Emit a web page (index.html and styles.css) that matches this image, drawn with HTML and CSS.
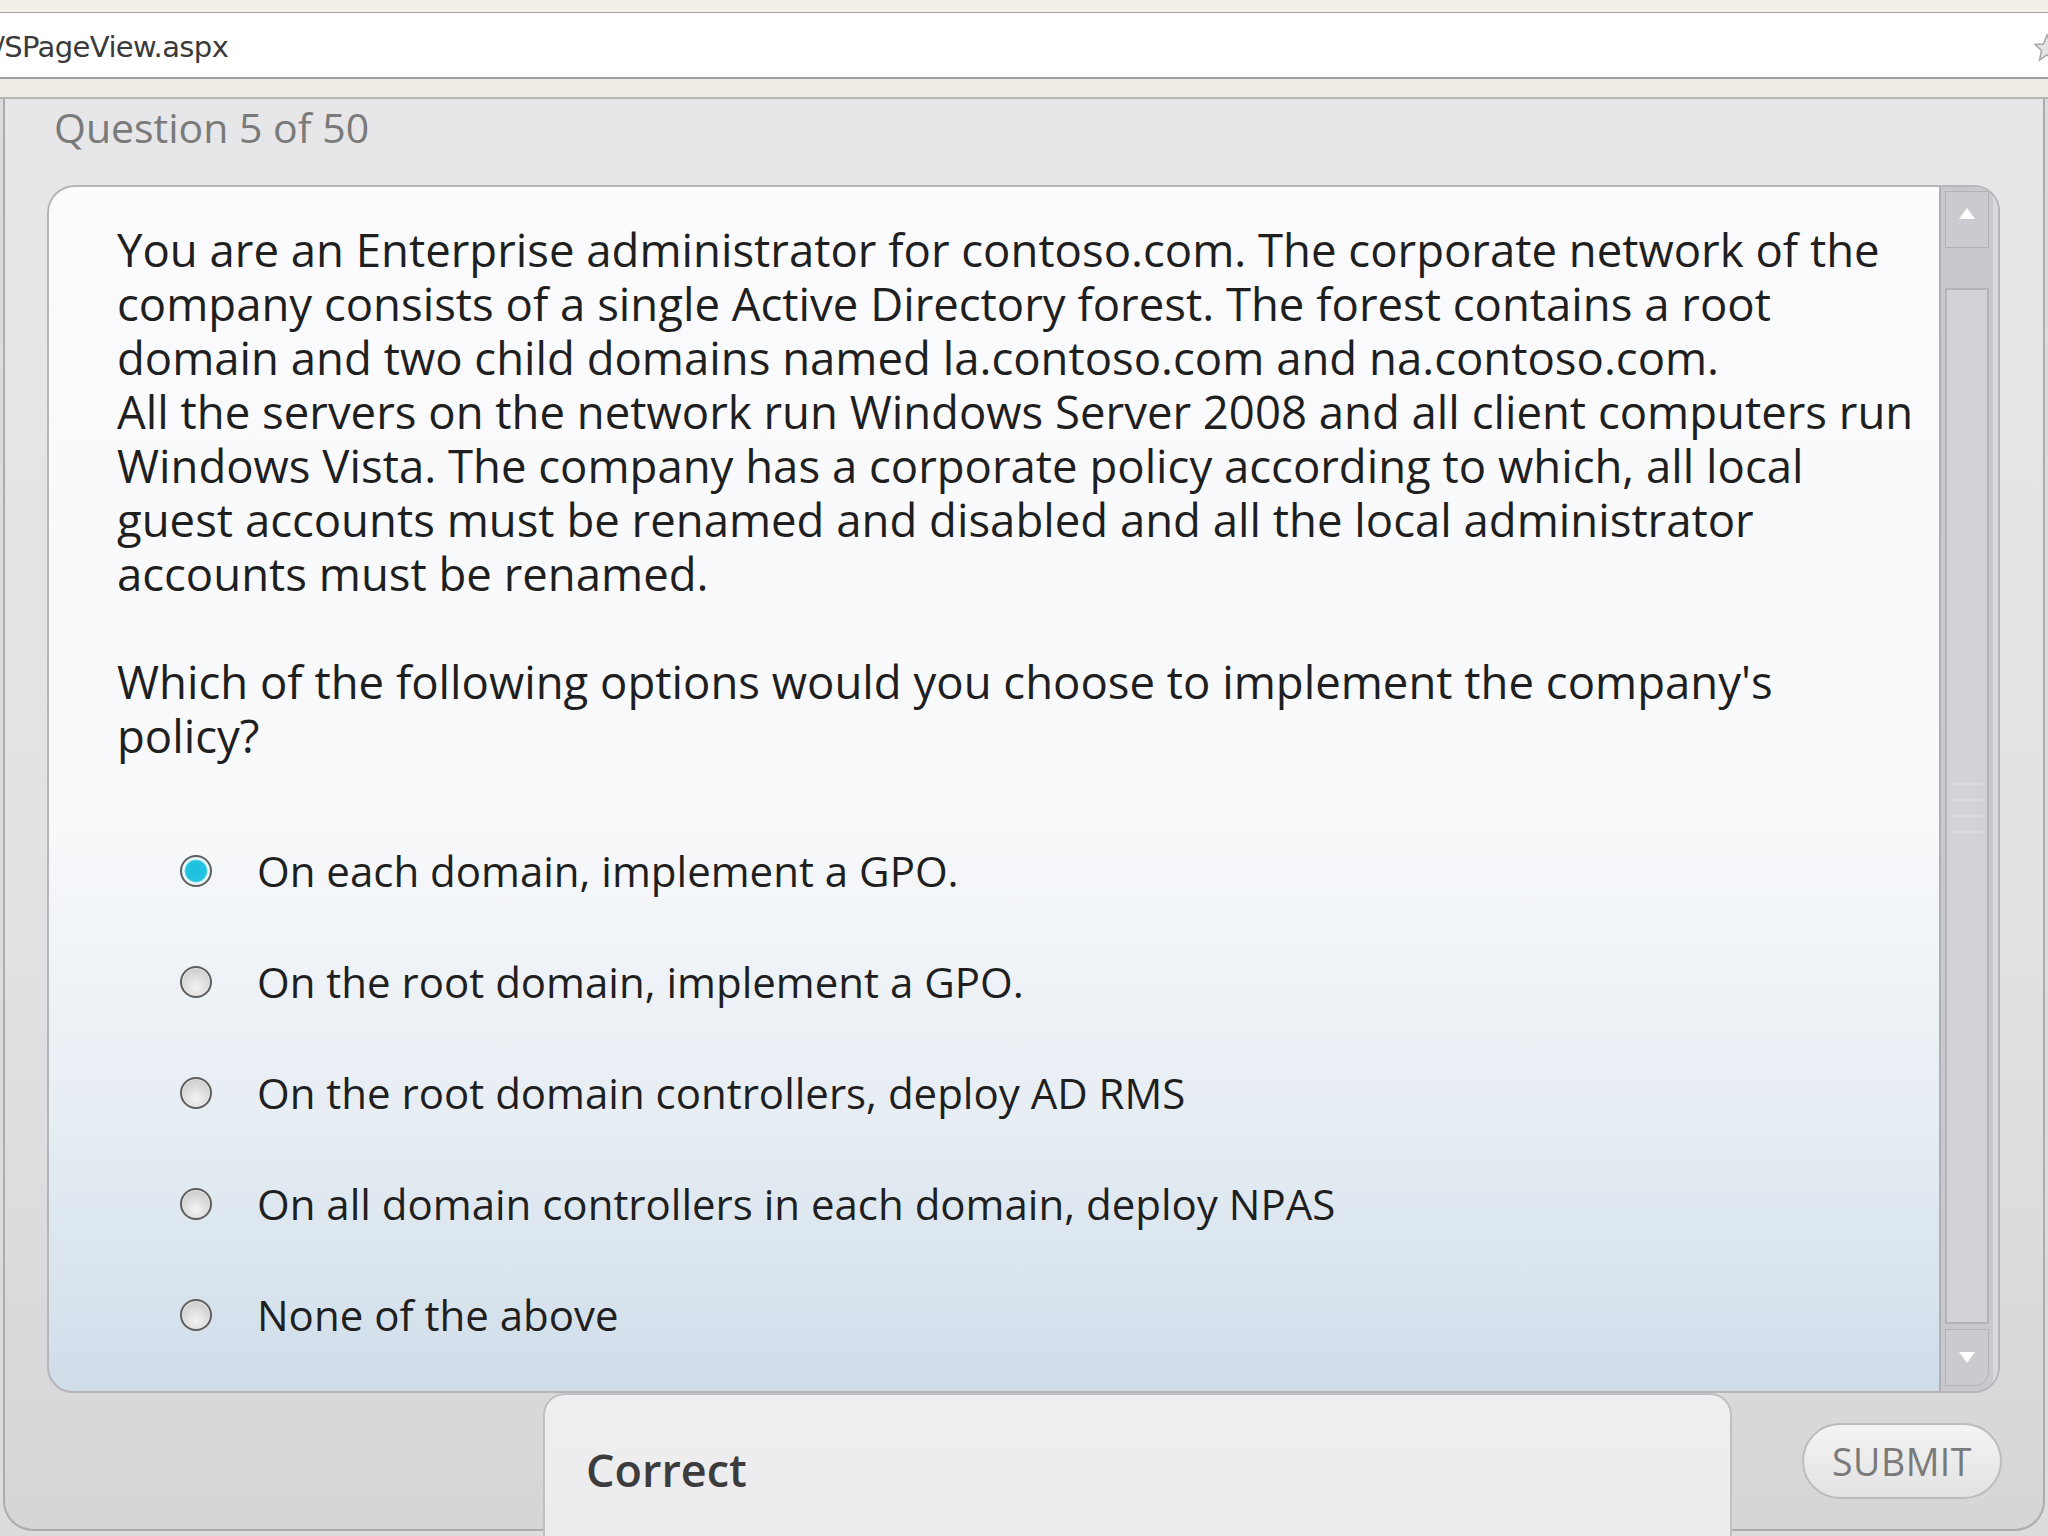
FILE: index.html
```html
<!DOCTYPE html>
<html lang="en">
<head>
  <meta charset="UTF-8">
  <title>Question 5 of 50</title>
  <link rel="stylesheet" href="styles.css">
</head>
<body>
  <div class="chrome-top"></div>
  <div class="address-bar">
    <span class="url">/SPageView.aspx</span>
    <svg class="fav-star" width="26" height="30" viewBox="0 0 26 30">
      <path d="M13 2 L16.5 11 L25 11.5 L18.5 17.5 L20.5 27 L13 22 L5.5 27 L7.5 17.5 L1 11.5 L9.5 11 Z" fill="#e4e4e4" stroke="#a6a6a6" stroke-width="1.5"/>
    </svg>
  </div>
  <div class="toolbar"></div>

  <div class="page">
    <div class="question-count">Question 5 of 50</div>

    <div class="question-card">
      <div class="question-body">
        <p class="question-text">You are an Enterprise administrator for contoso.com. The corporate network of the<br>company consists of a single Active Directory forest. The forest contains a root<br>domain and two child domains named la.contoso.com and na.contoso.com.<br>All the servers on the network run Windows Server 2008 and all client computers run<br>Windows Vista. The company has a corporate policy according to which, all local<br>guest accounts must be renamed and disabled and all the local administrator<br>accounts must be renamed.</p>
        <p class="question-text">Which of the following options would you choose to implement the company's<br>policy?</p>

        <ul class="options">
          <li class="option"><span class="radio checked"></span>On each domain, implement a GPO.</li>
          <li class="option"><span class="radio"></span>On the root domain, implement a GPO.</li>
          <li class="option"><span class="radio"></span>On the root domain controllers, deploy AD RMS</li>
          <li class="option"><span class="radio"></span>On all domain controllers in each domain, deploy NPAS</li>
          <li class="option"><span class="radio"></span>None of the above</li>
        </ul>
      </div>

      <!-- fake scrollbar, drawn like the player's own -->
      <div class="scrollbar">
        <div class="scroll-btn scroll-up"><span class="arrow-up"></span></div>
        <div class="scroll-track">
          <div class="scroll-thumb"><span class="grip"></span></div>
        </div>
        <div class="scroll-btn scroll-down"><span class="arrow-down"></span></div>
      </div>
    </div>

    <div class="footer">
      <div class="feedback">Correct</div>
      <button class="submit">SUBMIT</button>
    </div>
  </div>
</body>
</html>
```

FILE: styles.css
```css
:root {
  --text: #1f1f1f;
  --muted: #7a7a7a;
  --edge: #acacb0;
  --scroll: #c9c9cd;
}

html, body {
  margin: 0;
  padding: 0;
  overflow: hidden;
  height: 100%;
}

body {
  font-family: "Open Sans", "Noto Sans", sans-serif;
  color: var(--text);
  background: #dcdcde;
}

/* browser chrome */
.chrome-top {
  height: 12px;
  background: #f1efe6;
  border-bottom: 1px solid #a4a4a4;
}

.address-bar {
  height: 64px;
  background: #ffffff;
  border-bottom: 2px solid #9e9e9e;
  display: flex;
  align-items: center;
  justify-content: space-between;
  overflow: hidden;
}

.url {
  font-family: "DejaVu Sans", sans-serif;
  font-size: 29px;
  color: #3a3a3a;
  margin-left: -5px;
  padding-top: 4px;
  letter-spacing: -0.6px;
}

.fav-star {
  margin-right: -12px;
  margin-top: 6px;
}

.toolbar {
  height: 18px;
  background: #eeece3;
  border-bottom: 2px solid #b4b4b4;
}

/* player area */
.page {
  margin: 0 3px;
  height: 1430px;
  border: 2px solid var(--edge);
  border-top: none;
  border-radius: 0 0 30px 30px;
  background: linear-gradient(to bottom, #e7e7e9 0%, #e1e1e3 60%, #d6d6d8 100%);
  display: flex;
  flex-direction: column;
}

.question-count {
  font-size: 41px;
  line-height: 48px;
  color: var(--muted);
  margin: 4px 0 0 49px;
}

.question-card {
  flex-shrink: 0;
  margin: 34px 43px 0 42px;
  height: 1204px;
  border: 2px solid #b6b6ba;
  border-radius: 28px 26px 26px 26px;
  overflow: hidden;
  display: flex;
  background: linear-gradient(to bottom, #fbfbfd 0%, #f8f9fb 52%, #e6edf3 78%, #cfdde9 100%);
}

.question-body {
  flex: 1;
  padding: 35px 0 0 68px;
}

.question-text {
  margin: 0 0 54px 0;
  font-size: 45.5px;
  line-height: 54px;
  white-space: nowrap;
}

.question-text:last-of-type {
  margin-bottom: 0;
}

.options {
  list-style: none;
  margin: 53px 0 0 0;
  padding: 0;
}

.option {
  height: 111px;
  display: flex;
  align-items: center;
  font-size: 42px;
  white-space: nowrap;
}

.radio {
  flex-shrink: 0;
  width: 28px;
  height: 28px;
  margin: 0 45px 0 63px;
  border: 2px solid #5e5e5e;
  border-radius: 50%;
  background: radial-gradient(circle at 50% 70%, #f4f4f4 0%, #d8d8d8 55%, #c4c4c4 100%);
  box-shadow: inset 0 0 0 1px #e8e8e8;
}

.radio.checked {
  background: radial-gradient(circle, #1cbfdc 0%, #22c4e0 52%, #e9f8fb 60%, #f4f4f4 100%);
  box-shadow: none;
}

/* scrollbar column */
.scrollbar {
  width: 48px;
  flex-shrink: 0;
  background: var(--scroll);
  border-left: 2px solid #b0b0b4;
  border-right: 5px solid #dadade;
  display: flex;
  flex-direction: column;
  padding: 4px 0 5px 4px;
}

.scroll-btn {
  width: 42px;
  height: 55px;
  border: 1px solid #b2b2b6;
  background: #cbcbcf;
  display: flex;
  align-items: center;
  justify-content: center;
}

.scroll-down {
  border-radius: 0 0 14px 0;
}

.arrow-up {
  width: 0;
  height: 0;
  border-left: 8px solid transparent;
  border-right: 8px solid transparent;
  border-bottom: 11px solid #ffffff;
  margin-top: -12px;
}

.arrow-down {
  width: 0;
  height: 0;
  border-left: 8px solid transparent;
  border-right: 8px solid transparent;
  border-top: 11px solid #ffffff;
}

.scroll-track {
  flex: 1;
  padding: 40px 0 5px 0;
  display: flex;
}

.scroll-thumb {
  flex: 1;
  max-width: 40px;
  border: 2px solid #b4b4b8;
  background: #d3d3d7;
  display: flex;
  align-items: flex-start;
  justify-content: center;
}

.grip {
  width: 30px;
  height: 52px;
  margin-top: 493px;
  background: repeating-linear-gradient(to bottom, #dcdcdf 0, #dcdcdf 2px, #d3d3d7 2px, #d3d3d7 16px);
}

/* bottom row */
.footer {
  flex: 1;
  display: flex;
  align-items: flex-start;
}

.feedback {
  position: relative;
  z-index: 1;
  margin-left: 538px;
  width: 1189px;
  height: 170px;
  box-sizing: border-box;
  padding: 47px 0 0 41px;
  border: 2px solid #c0c0c4;
  border-bottom: none;
  border-radius: 22px 22px 0 0;
  background: linear-gradient(to bottom, #efeff1, #ebebed);
  font-size: 45px;
  font-weight: 600;
  line-height: 56px;
  color: #3c3c3c;
}

.submit {
  margin: 30px 41px 0 auto;
  width: 200px;
  height: 76px;
  border: 2px solid #bcbcbc;
  border-radius: 38px;
  background: linear-gradient(to bottom, #f4f4f4, #e2e2e2);
  font-family: "Open Sans", sans-serif;
  font-size: 37.5px;
  color: #7a7a7a;
  letter-spacing: 0.5px;
  padding: 0;
}
```
